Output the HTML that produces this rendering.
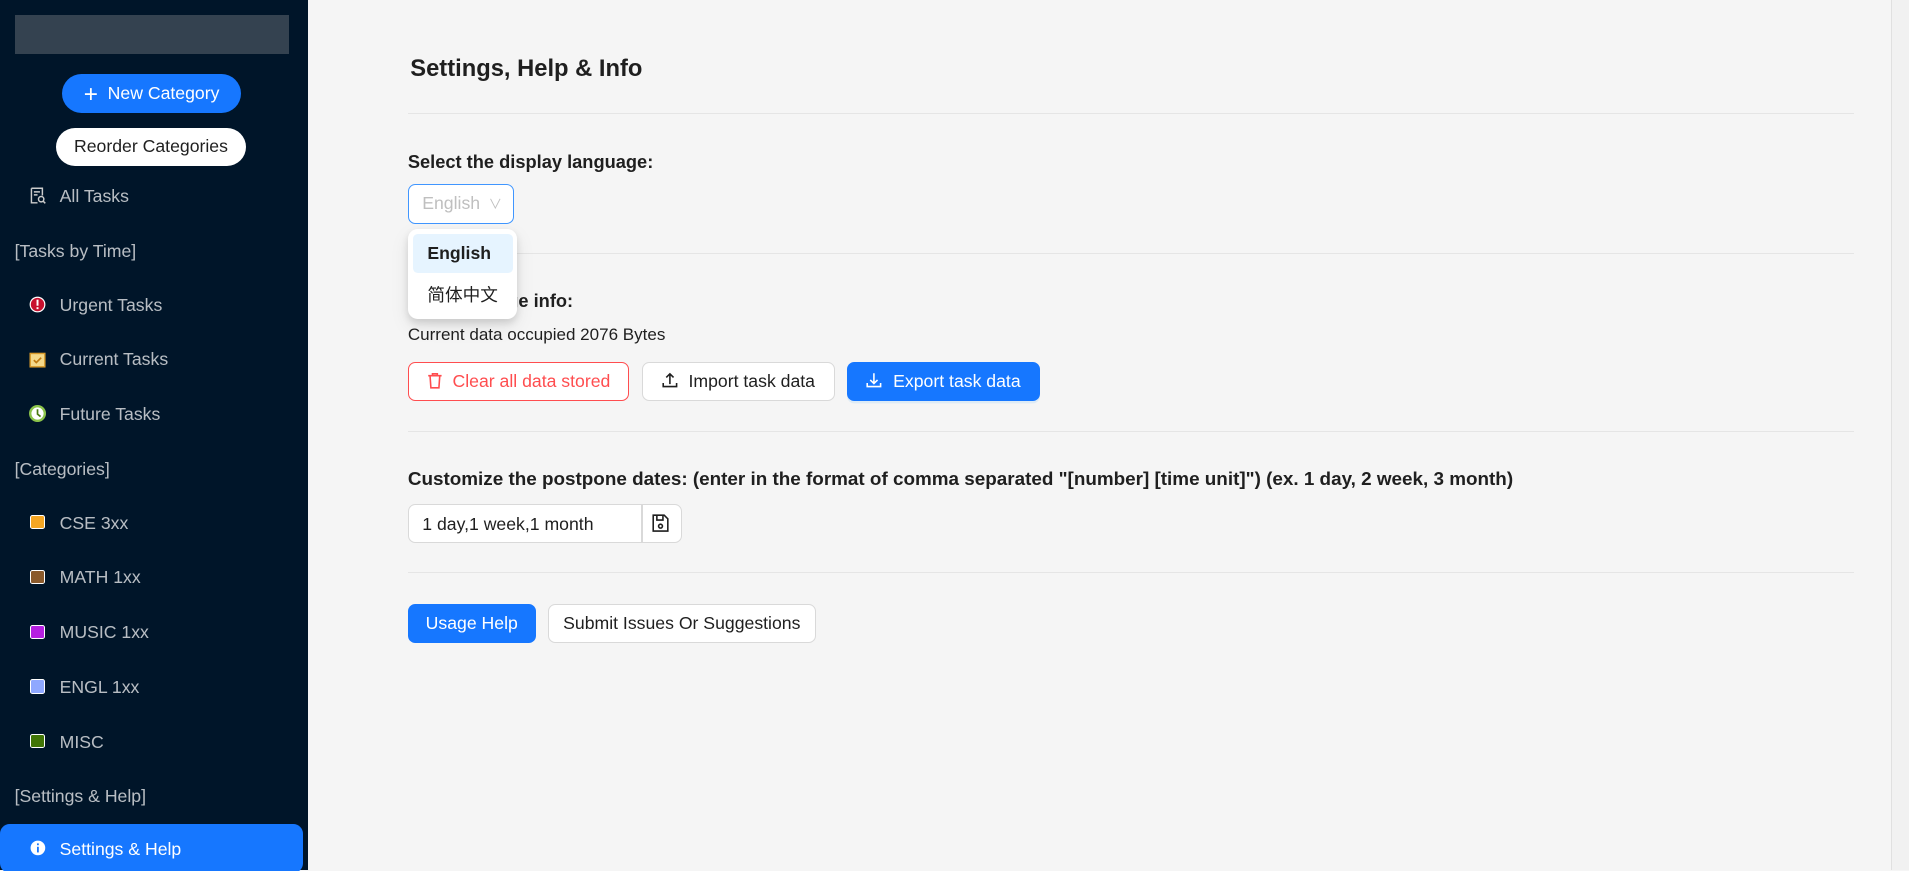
<!DOCTYPE html>
<html><head><meta charset="utf-8"><style>
html,body{margin:0;padding:0;width:1909px;height:871px;overflow:hidden;background:#f5f5f5;}
#w{zoom:1.21747;width:1568px;height:715px;position:relative;font-family:"Liberation Sans","Noto Sans CJK SC",sans-serif;font-size:14px;color:#1f1f1f;}
.sb{position:absolute;left:0;top:0;width:253px;height:715px;background:#001529;color:rgba(255,255,255,.72);}
.logo{position:absolute;left:12px;top:12px;width:225px;height:32px;background:#344250;}
.nb{position:absolute;left:51px;top:61px;width:147px;height:32px;border-radius:16px;background:#1677ff;color:#fff;font-size:14.5px;line-height:32px;text-align:center;}
.rb{position:absolute;left:46px;top:105px;width:156px;height:31px;border-radius:16px;background:#fff;color:#1f1f1f;line-height:31px;text-align:center;font-size:14.5px;}
.it{position:absolute;left:49px;font-size:14.5px;}
.gr{position:absolute;left:12px;font-size:14.5px;}
.ic{position:absolute;left:24px;width:14px;height:14px;}
.sq{position:absolute;left:25px;width:10px;height:10px;border:1.5px solid #fff;border-radius:2px;}
.act{position:absolute;left:0;top:677px;width:249px;height:40px;background:#1677ff;border-radius:8px;color:#fff;}
.main{position:absolute;left:253px;top:0;width:1300px;height:715px;background:#f5f5f5;}
.scr{position:absolute;left:1553px;top:0;width:15px;height:715px;background:#f1f1f1;border-left:1px solid #e0e0e0;}
.hr{position:absolute;left:335px;width:1188px;height:1px;background:#e5e5e5;}
.t{position:absolute;white-space:nowrap;}
.btn{position:absolute;height:32px;border-radius:6px;box-sizing:border-box;line-height:30px;font-size:14.5px;text-align:center;}
</style></head><body><div id="w">
<div class="sb">
<div class="logo"></div>
<div class="nb"><span style="font-size:20px;vertical-align:-2px;margin-right:8px">+</span>New Category</div>
<div class="rb">Reorder Categories</div>
<svg class="ic" style="top:154px" viewBox="0 0 14 14" fill="none" stroke="#ccc" stroke-width="1.2"><path d="M2 1h9v6M2 1v12h5M4 4h5M4 6.5h3"/><circle cx="10" cy="10" r="2.2"/><path d="M11.6 11.6l1.8 1.8"/></svg>
<div class="it" style="top:153px">All Tasks</div>
<div class="gr" style="top:198px">[Tasks by Time]</div>
<svg class="ic" style="top:243px" viewBox="0 0 14 14"><circle cx="7" cy="7" r="6" fill="#c8102e" stroke="#fff" stroke-width="1"/><rect x="6.2" y="3" width="1.6" height="5" fill="#fff"/><rect x="6.2" y="9.2" width="1.6" height="1.6" fill="#fff"/></svg>
<div class="it" style="top:242px">Urgent Tasks</div>
<svg class="ic" style="top:288px" viewBox="0 0 14 14"><rect x="1" y="2" width="12" height="11" fill="#f5d98a" stroke="#d89a2a" stroke-width="1.2"/><path d="M4 7.5l2 2 4-4" stroke="#c07a10" stroke-width="1.4" fill="none"/></svg>
<div class="it" style="top:287px">Current Tasks</div>
<svg class="ic" style="top:333px" viewBox="0 0 14 14"><circle cx="7" cy="7" r="6" fill="#fff" stroke="#8bc34a" stroke-width="2"/><path d="M7 3.5V7.5l2.5 2" stroke="#4a7a10" stroke-width="1.4" fill="none"/></svg>
<div class="it" style="top:332px">Future Tasks</div>
<div class="gr" style="top:377px">[Categories]</div>
<div class="sq" style="top:423px;background:#f5a623"></div><div class="it" style="top:421px">CSE 3xx</div>
<div class="sq" style="top:468px;background:#8b5a2b"></div><div class="it" style="top:466px">MATH 1xx</div>
<div class="sq" style="top:513px;background:#b620e0"></div><div class="it" style="top:511px">MUSIC 1xx</div>
<div class="sq" style="top:558px;background:#8fa8ff"></div><div class="it" style="top:556px">ENGL 1xx</div>
<div class="sq" style="top:603px;background:#417505"></div><div class="it" style="top:601px">MISC</div>
<div class="gr" style="top:646px">[Settings &amp; Help]</div>
<div class="act"><svg style="position:absolute;left:25px;top:13px" width="13" height="13" viewBox="0 0 14 14"><circle cx="7" cy="7" r="6.5" fill="#fff"/><rect x="6.2" y="6" width="1.6" height="5" fill="#1677ff"/><rect x="6.2" y="3" width="1.6" height="1.6" fill="#1677ff"/></svg><span style="position:absolute;left:49px;top:12px;font-size:14.5px">Settings &amp; Help</span></div>
</div>
<div class="main"></div>
<div class="scr"></div>
<div class="t" style="left:337px;top:46px;font-size:19.5px;font-weight:bold;color:#1f1f1f">Settings, Help &amp; Info</div>
<div class="hr" style="top:93px"></div>
<div class="t" style="left:335px;top:124px;font-size:15px;font-weight:bold">Select the display language:</div>
<div style="position:absolute;left:335px;top:151px;width:87px;height:33px;box-sizing:border-box;border:1px solid #4096ff;border-radius:6px;background:#fff;color:#bfbfbf;font-size:14.5px;line-height:31px;padding-left:11px">English <span style="font-size:11px;margin-left:3px">&#8744;</span></div>
<div class="hr" style="top:208px"></div>
<div class="t" style="left:335px;top:238px;font-size:15px;font-weight:bold">Local Storage info:</div>
<div style="position:absolute;left:335px;top:188px;width:90px;height:74px;background:#fff;border-radius:8px;box-shadow:0 6px 16px rgba(0,0,0,.08),0 3px 6px rgba(0,0,0,.12)"></div>
<div style="position:absolute;left:339px;top:192px;width:82px;height:32px;background:#e6f4ff;border-radius:4px"></div>
<div class="t" style="left:351px;top:200px;font-size:14.5px;font-weight:bold">English</div>
<div class="t" style="left:351px;top:232px;font-size:14.5px">简体中文</div>
<div class="t" style="left:335px;top:267px;font-size:14px">Current data occupied 2076 Bytes</div>
<div class="btn" style="left:335px;top:297px;width:182px;border:1px solid #ff4d4f;color:#ff4d4f;background:#fff"><svg width="13" height="14" viewBox="0 0 13 14" style="vertical-align:-2px;margin-right:8px" fill="none" stroke="#ff4d4f" stroke-width="1.3"><path d="M1 3h11M4.5 3V1.5h4V3M2.5 3l.7 10h6.6l.7-10"/></svg>Clear all data stored</div>
<div class="btn" style="left:527px;top:297px;width:159px;border:1px solid #d9d9d9;background:#fff"><svg width="13" height="13" viewBox="0 0 13 13" style="vertical-align:-1px;margin-right:9px" fill="none" stroke="#1f1f1f" stroke-width="1.3"><path d="M6.5 10V1.5M3.5 4.5l3-3 3 3M1 9v3h11V9"/></svg>Import task data</div>
<div class="btn" style="left:696px;top:297px;width:158px;background:#1677ff;color:#fff;line-height:32px;box-shadow:0 2px 0 rgba(5,145,255,.1)"><svg width="13" height="13" viewBox="0 0 13 13" style="vertical-align:-1px;margin-right:9px" fill="none" stroke="#fff" stroke-width="1.3"><path d="M6.5 1v8.5M3.5 6.5l3 3 3-3M1 9v3h11V9"/></svg>Export task data</div>
<div class="hr" style="top:354px"></div>
<div class="t" style="left:335px;top:384px;font-size:15.5px;font-weight:bold">Customize the postpone dates: (enter in the format of comma separated "[number] [time unit]") (ex. 1 day, 2 week, 3 month)</div>
<div style="position:absolute;left:335px;top:414px;width:225px;height:32px;box-sizing:border-box;border:1px solid #d9d9d9;border-radius:6px;background:#fff"><span style="position:absolute;left:11px;top:7px;font-size:14.5px">1 day,1 week,1 month</span><div style="position:absolute;left:191px;top:0;width:1px;height:30px;background:#d9d9d9"></div><svg style="position:absolute;left:200px;top:7px" width="14" height="15" viewBox="0 0 14 15" fill="none" stroke="#1f1f1f" stroke-width="1.3"><path d="M1 1h9l3 3v10H1z M4 1v4h5V1"/><circle cx="7" cy="10" r="1.6"/></svg></div>
<div class="hr" style="top:470px"></div>
<div class="btn" style="left:335px;top:496px;width:105px;background:#1677ff;color:#fff;line-height:32px">Usage Help</div>
<div class="btn" style="left:450px;top:496px;width:220px;border:1px solid #d9d9d9;background:#fff">Submit Issues Or Suggestions</div>
</div></body></html>
